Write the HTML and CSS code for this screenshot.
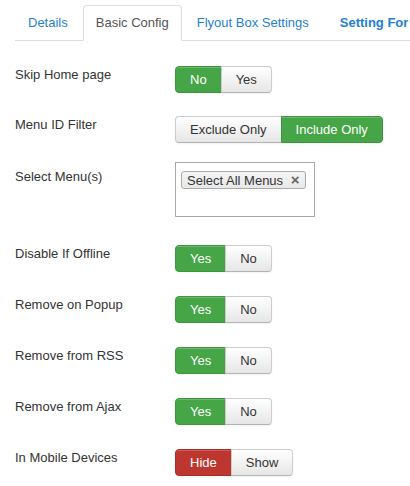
FILE: index.html
```
<!DOCTYPE html>
<html lang="en">

<head>
    <meta charset="UTF-8">
    <title>Basic Config</title>
    <link rel="stylesheet" href="styles.css">
</head>

<body>
    <ul class="tabs">
        <li><a href="#">Details</a></li>
        <li class="active"><a href="#">Basic Config</a></li>
        <li><a href="#">Flyout Box Settings</a></li>
        <li><a href="#" class="strong">Setting For</a></li>
    </ul>

    <div class="form">
        <div class="row row-first">
            <div class="label">Skip Home page</div>
            <div class="btns">
                <span class="btn on">No</span><span class="btn">Yes</span>
            </div>
        </div>
        <div class="row row-filter">
            <div class="label">Menu ID Filter</div>
            <div class="btns">
                <span class="btn">Exclude Only</span><span class="btn on">Include Only</span>
            </div>
        </div>
        <div class="row row-select">
            <div class="label">Select Menu(s)</div>
            <div class="select">
                <span class="chip">Select All Menus <b>&times;</b></span>
            </div>
        </div>
        <div class="row">
            <div class="label">Disable If Offline</div>
            <div class="btns">
                <span class="btn on">Yes</span><span class="btn">No</span>
            </div>
        </div>
        <div class="row">
            <div class="label">Remove on Popup</div>
            <div class="btns">
                <span class="btn on">Yes</span><span class="btn">No</span>
            </div>
        </div>
        <div class="row">
            <div class="label">Remove from RSS</div>
            <div class="btns">
                <span class="btn on">Yes</span><span class="btn">No</span>
            </div>
        </div>
        <div class="row">
            <div class="label">Remove from Ajax</div>
            <div class="btns">
                <span class="btn on">Yes</span><span class="btn">No</span>
            </div>
        </div>
        <div class="row">
            <div class="label">In Mobile Devices</div>
            <div class="btns">
                <span class="btn off">Hide</span><span class="btn">Show</span>
            </div>
        </div>
    </div>
</body>

</html>
```

FILE: styles.css
```
body,
html {
    margin: 0;
    background: #fff;
    font-family: "Liberation Sans", Arial, sans-serif;
    font-size: 13px;
    color: #333;
    overflow: hidden;
}

ul {
    margin: 0;
    padding: 0;
    list-style-type: none;
}

.tabs {
    display: flex;
    margin: 5px 0 0 15px;
    border-bottom: 1px solid #ddd;
    white-space: nowrap;
}

.tabs li {
    margin-bottom: -1px;
}

.tabs a {
    display: block;
    margin-right: 2px;
    padding: 8px 12px;
    line-height: 18px;
    border: 1px solid transparent;
    border-radius: 4px 4px 0 0;
    color: #1f7fd2;
    text-decoration: none;
}

.tabs .active a {
    color: #555;
    border-color: #ddd #ddd transparent;
    background: #fff;
}

.tabs .strong {
    font-weight: bold;
    padding-left: 15px;
}

.form {
    padding: 25px 0 0 15px;
}

.row {
    display: flex;
    height: 27px;
    margin-bottom: 24px;
}

.row-first {
    margin-bottom: 23px;
}

.row-filter {
    margin-bottom: 19px;
}

.label {
    width: 160px;
    line-height: 18px;
}

.btns {
    display: flex;
}

.btn {
    display: block;
    padding: 4px 14px 3px;
    line-height: 18px;
    color: #333;
    background: linear-gradient(#fff, #e6e6e6);
    border: 1px solid #ccc;
    border-bottom-color: #b3b3b3;
    box-shadow: inset 0 1px 0 rgba(255, 255, 255, .2), 0 1px 2px rgba(0, 0, 0, .05);
}

.btn:first-child {
    border-radius: 4px 0 0 4px;
}

.btn:last-child {
    border-radius: 0 4px 4px 0;
    margin-left: -1px;
}

.btn.on {
    color: #fff;
    background: #46a546;
    border-color: #3f953f;
}

.btn.off {
    color: #fff;
    background: #bd362f;
    border-color: #a9302a;
}

.row-select {
    height: 55px;
    margin-bottom: 28px;
}

.row-select .label {
    padding-top: 6px;
}

.select {
    width: 138px;
    height: 53px;
    border: 1px solid #aaa;
}

.chip {
    display: inline-block;
    margin: 8px 0 0 5px;
    padding: 0 6px 0 5px;
    line-height: 15px;
    font-size: 13px;
    border: 1px solid #aaa;
    border-radius: 3px;
    background: linear-gradient(#f4f4f4, #e8e8e8);
    color: #333;
}

.chip b {
    color: #666;
    font-size: 15px;
    margin-left: 4px;
}
```
